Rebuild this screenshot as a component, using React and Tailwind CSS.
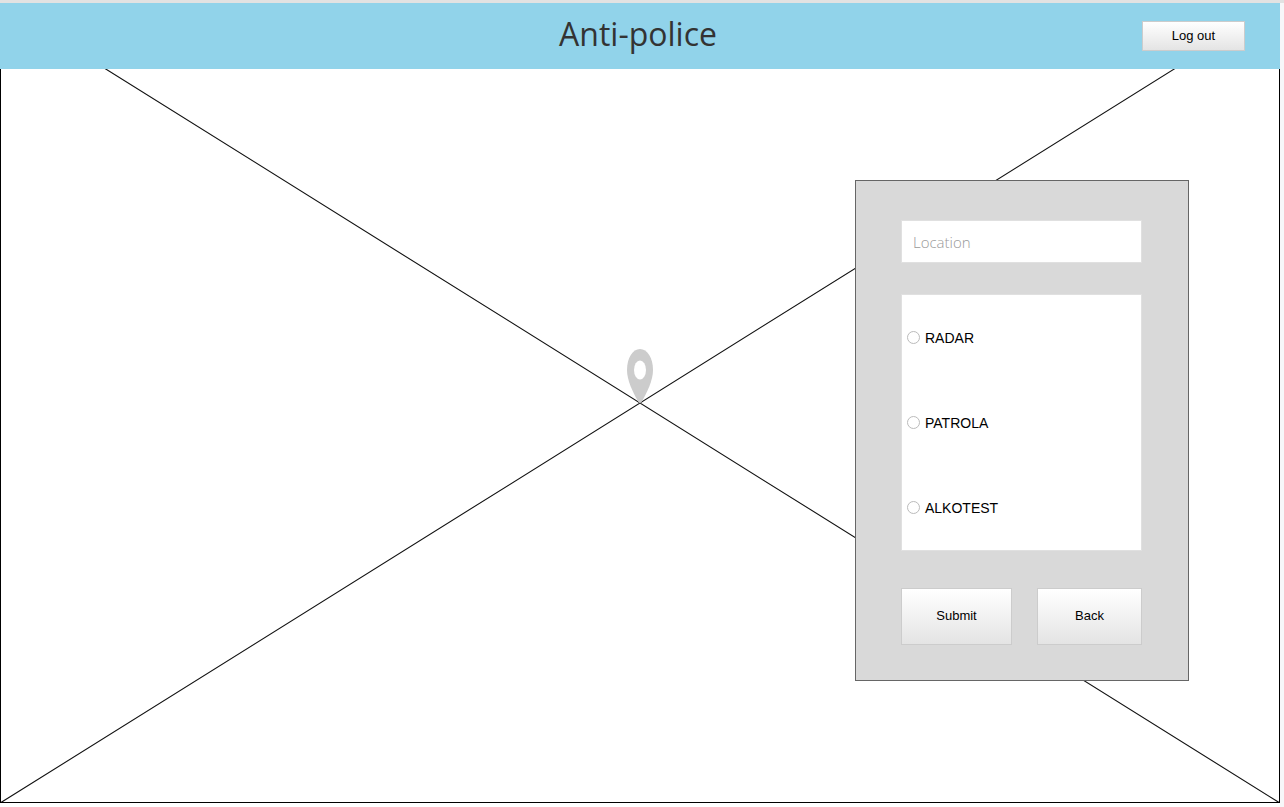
const reportTypes = ["RADAR", "PATROLA", "ALKOTEST"];

function MapPlaceholder() {
  return (
    <svg
      className="absolute inset-0 h-full w-full"
      viewBox="0 0 1280 800"
      preserveAspectRatio="none"
      aria-hidden="true"
    >
      <path
        d="M0 -0.5L1280 800.5M1280 -0.5L0 800.5"
        stroke="#111"
        strokeWidth="1.1"
        fill="none"
      />
    </svg>
  );
}

function Pin() {
  return (
    <svg
      className="absolute bottom-1/2 left-1/2 h-[54px] w-[26px] -translate-x-1/2"
      viewBox="0 0 26 54"
      aria-label="Map marker"
    >
      <path
        d="M13 0C5.8 0 0 8.7 0 21C0 31 6 44 11.500 53Q13 55 14.500 53C20 44 26 31 26 21C26 8.700 20.200 0 13 0Z"
        fill="#ccc"
      />
      <ellipse cx="13" cy="21" rx="6" ry="9.500" fill="#fff" />
    </svg>
  );
}

function PlainButton({ className, ...props }) {
  return (
    <button
      type="button"
      className={`border border-[#ccc] bg-linear-to-b from-white to-[#e4e4e4] text-[13px] text-black ${className}`}
      {...props}
    />
  );
}

export default function App() {
  return (
    <div className="flex min-h-screen flex-col overflow-hidden border-t-3 border-[#e2e2e2] bg-white font-['Liberation_Sans',sans-serif] text-sm text-black">
      <div className="flex flex-1 border-r-4 border-[#f7f7f9]">
        <main className="relative mb-1 flex flex-1 flex-col border border-black">
          <MapPlaceholder />
          <Pin />
          <header className="relative -mx-px -mt-px grid h-[66px] grid-cols-[1fr_auto_1fr] items-center bg-[#91d3ea] pr-[35px] pl-[31px]">
            <h1 className="col-start-2 pb-[5px] font-['Open_Sans',sans-serif] text-[32px] leading-10 font-normal text-[#333]">
              Anti-police
            </h1>
            <PlainButton className="h-[30px] w-[103px] justify-self-end">Log out</PlainButton>
          </header>
          <form className="relative mt-[111px] mr-[90px] mb-8 flex w-[334px] flex-col self-end border border-[#666] bg-[#d9d9d9] pt-[39px] pr-[46px] pb-[35px] pl-[45px]">
            <input
              aria-label="Location"
              placeholder="Location"
              className="h-[43px] border border-[#e0e0e0] bg-white px-[11px] font-['Open_Sans',sans-serif] text-[15px] font-light placeholder:text-[#999]"
            />
            <fieldset
              aria-label="Report type"
              className="mt-[31px] grid auto-rows-[85px] border border-[#e0e0e0] bg-white px-[5px]"
            >
              {reportTypes.map((type) => (
                <label key={type} className="flex items-center gap-[5px] leading-5">
                  <input
                    type="radio"
                    name="report"
                    value={type}
                    className="h-[13px] w-[13px] appearance-none rounded-full border border-[#bbb] bg-white checked:bg-[#666]"
                  />
                  {type}
                </label>
              ))}
            </fieldset>
            <div className="mt-[37px] flex justify-between">
              <PlainButton className="h-[57px] w-[111px]">Submit</PlainButton>
              <PlainButton className="h-[57px] w-[105px]">Back</PlainButton>
            </div>
          </form>
        </main>
      </div>
    </div>
  );
}
